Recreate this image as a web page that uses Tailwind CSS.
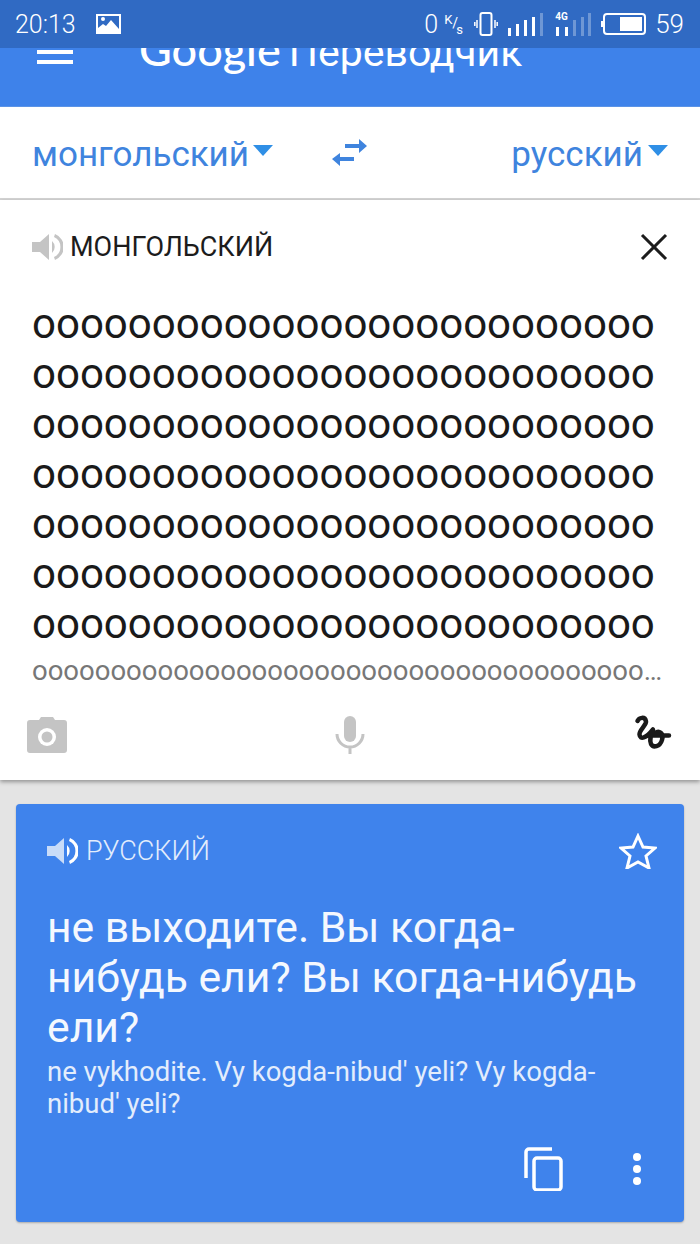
<!DOCTYPE html>
<html lang="ru">
<head>
<meta charset="UTF-8">
<meta name="viewport" content="width=device-width, initial-scale=1.0">
<script src="https://cdn.jsdelivr.net/npm/@tailwindcss/browser@4"></script>
<title>Google Переводчик</title>
</head>
<body class="w-[700px] h-[1244px] overflow-hidden bg-[#e4e4e4] font-[Roboto,sans-serif]">

  <!-- status bar -->
  <div class="h-[48px] bg-[#306ac3] text-white flex items-center pl-[15px] pr-[16px] relative z-10">
    <span class="text-[25px] leading-none font-light">20:13</span>
    <svg class="ml-[19px]" width="27" height="22" viewBox="0 0 27 22"><path fill="#fff" fill-rule="evenodd" d="M1 1h25v20H1z M3 3v12l5-4 3 2 5-6 8 9V3z"/><circle cx="8" cy="6" r="2" fill="#fff"/></svg>
    <span class="ml-auto text-[25px] leading-none font-light">0</span>
    <span class="ml-[6px] text-[13px] leading-none relative w-[20px] h-[22px]"><span class="absolute left-0 top-0">K</span><span class="absolute left-[8px] top-[3px] text-[14px]">/</span><span class="absolute left-[12px] top-[10px]">s</span></span>
    <svg class="ml-[10px]" width="24" height="26" viewBox="0 0 24 26" fill="none" stroke="#fff"><rect x="6.500" y="2" width="11" height="22" rx="2" stroke-width="2"/><path d="M3 9v8M0.800 11v4M21 9v8M23.200 11v4" stroke-width="1.500"/></svg>
    <svg class="ml-[9px]" width="36" height="26" viewBox="0 0 36 26" fill="#fff"><rect x="1" y="17" width="3" height="8"/><rect x="9" y="13" width="3" height="12"/><rect x="17" y="9" width="3" height="16"/><rect x="25" y="6" width="3" height="19"/><rect x="33" y="2" width="3" height="23" opacity=".3"/></svg>
    <span class="ml-[12px] w-[36px] h-[26px] relative block">
      <span class="absolute left-0 top-[1px] text-[10px] leading-none font-bold">4G</span>
      <svg class="absolute left-0 top-0" width="36" height="26" viewBox="0 0 36 26" fill="#fff"><rect x="1" y="16" width="3" height="9"/><rect x="10" y="16" width="3" height="9"/><rect x="18" y="9" width="3" height="16" opacity=".3"/><rect x="26" y="6" width="3" height="19" opacity=".3"/><rect x="33" y="2" width="3" height="23" opacity=".3"/></svg>
    </span>
    <svg class="ml-[10px]" width="45" height="24" viewBox="0 0 45 24"><rect x="0" y="9" width="2" height="6" fill="#fff"/><rect x="3" y="2" width="41" height="20" rx="3" fill="none" stroke="#fff" stroke-width="2"/><rect x="19" y="5" width="22" height="14" fill="#fff"/></svg>
    <span class="ml-[9px] text-[26px] leading-none font-light">59</span>
  </div>

  <!-- app bar -->
  <div class="h-[59px] bg-[#3e82ea] overflow-hidden flex items-start pl-[37px] border-b border-[#5b93e6]">
    <div class="flex flex-col gap-[6px] w-[36px] mt-[2px]">
      <span class="h-[4px] bg-white"></span>
      <span class="h-[4px] bg-white"></span>
    </div>
    <div class="ml-[66px] -mt-[22px] text-white text-[41px] leading-[46px] whitespace-nowrap"><span class="font-[Lato,sans-serif] font-medium text-[45px]">Google</span><span class="ml-[8px] font-normal">Переводчик</span></div>
  </div>

  <!-- language picker -->
  <div class="h-[93px] bg-white border-b-2 border-[#d4d4d4] flex items-center pl-[32px] pr-[32px] text-[#3f84de] text-[35px] relative">
    <div class="flex-1 flex items-center mt-[4px]">
      <span class="leading-none">монгольский</span>
      <svg class="ml-[4px] -mt-[8px]" width="20" height="12" viewBox="0 0 20 12"><path fill="#2f8fe6" d="M0 0h20L10 11z"/></svg>
    </div>
    <svg class="mt-[1px]" width="36" height="28" viewBox="0 0 36 28" fill="#3f84de"><path d="M8 14L0 20l8 7v-5h14v-4H8zM27 0v5H13v4h14v5l8-7z"/></svg>
    <div class="flex-1 flex items-center justify-end mt-[4px]">
      <span class="leading-none">русский</span>
      <svg class="ml-[5px] -mt-[8px]" width="20" height="12" viewBox="0 0 20 12"><path fill="#2f8fe6" d="M0 0h20L10 11z"/></svg>
    </div>
  </div>

  <!-- source panel -->
  <div class="h-[580px] bg-white shadow-[0_2px_4px_rgba(0,0,0,0.35)] relative pl-[32px] pr-[32px]">
    <div class="flex items-center h-[30px] mt-0 pt-[32px] box-content">
      <svg width="31" height="28" viewBox="0 0 31 28" fill="#c4c4c4"><path d="M0 9h8l9-8v26l-9-8H0z"/><path d="M20 8a8 8 0 0 1 0 12z"/><path d="M23 1a14 14 0 0 1 0 26l-1-3a11 11 0 0 0 0-20z"/></svg>
      <span class="ml-[7px] text-[27px] leading-none text-[#1c1c1c]">МОНГОЛЬСКИЙ</span>
      <svg class="ml-auto" width="28" height="28" viewBox="0 0 28 28" stroke="#1c1c1c" stroke-width="3"><path d="M2 2l24 24M26 2L2 26"/></svg>
    </div>
    <div class="mt-[37px] text-[42px] leading-[50px] text-[#1a1a1a] whitespace-nowrap">
      <div>оооооооооооооооооооооооооо</div>
      <div>оооооооооооооооооооооооооо</div>
      <div>оооооооооооооооооооооооооо</div>
      <div>оооооооооооооооооооооооооо</div>
      <div>оооооооооооооооооооооооооо</div>
      <div>оооооооооооооооооооооооооо</div>
      <div>оооооооооооооооооооооооооо</div>
    </div>
    <div class="mt-[8px] text-[27.5px] leading-[28px] text-[#777] whitespace-nowrap">ooooooooooooooooooooooooooooooooooooooo…</div>
    <div class="absolute left-[27px] right-[28px] top-[515px] flex items-center justify-between">
      <svg width="40" height="36" viewBox="0 0 40 36"><path fill="#c4c4c4" d="M12 3l2-3h12l2 3h9a3 3 0 0 1 3 3v27a3 3 0 0 1-3 3H3a3 3 0 0 1-3-3V6a3 3 0 0 1 3-3z"/><circle cx="20" cy="20" r="9" fill="#fff"/><circle cx="20" cy="20" r="5.500" fill="#c4c4c4"/></svg>
      <svg width="30" height="38" viewBox="0 0 30 38"><rect x="9" y="0" width="12" height="26" rx="6" fill="#c4c4c4"/><path d="M2 18a13 13 0 0 0 26 0M15 31v7" fill="none" stroke="#c4c4c4" stroke-width="3"/></svg>
      <svg width="40" height="40" viewBox="0 0 40 40" fill="none" stroke="#1a1a1a" stroke-width="4.500" stroke-linecap="round" stroke-linejoin="round"><path d="M5.500 6C7 2.500 13 1 14 6.500C14.500 10 7 15 7.500 19.500C8 25 14 23.500 21 14.500C19 20 17 25 19 29C21 33 28 32 30 25C32 18 27 15 23 18C21 19.500 20 20.500 20 20.500L37 20.500"/></svg>
    </div>
  </div>

  <!-- result card -->
  <div class="mt-[24px] mx-[16px] h-[418px] rounded-[4px] bg-[#3f83ec] shadow-[0_1px_2px_rgba(0,0,0,0.25)] text-white relative pl-[31px] pr-[27px]">
    <div class="flex items-center h-[30px] pt-[32px] box-content">
      <svg width="31" height="28" viewBox="0 0 31 28"><path fill="#c9dcf8" d="M0 9h8l9-8v26l-9-8H0z"/><path fill="#fff" d="M20 8a8 8 0 0 1 0 12z"/><path fill="#fff" d="M23 1a14 14 0 0 1 0 26l-1-3a11 11 0 0 0 0-20z"/></svg>
      <span class="ml-[8px] text-[27px] leading-none text-[#e3edfc] font-light">РУССКИЙ</span>
      <svg class="ml-auto" width="38" height="36" viewBox="0 0 38 36" fill="none" stroke="#fff" stroke-width="3" stroke-linejoin="miter"><path d="M19 3l5 11 12 1-9 8 3 12-11-6-11 6 3-12-9-8 12-1z"/></svg>
    </div>
    <div class="mt-[36px] text-[42.7px] leading-[50px] font-normal text-[#f4f8fe]">не выходите. Вы когда-<br>нибудь ели? Вы когда-нибудь<br>ели?</div>
    <div class="mt-[4px] text-[27.5px] leading-[32px] text-[#e3edfc] font-normal">ne vykhodite. Vy kogda-nibud' yeli? Vy kogda-<br>nibud' yeli?</div>
    <svg class="absolute left-[508px] top-[343px]" width="40" height="44" viewBox="0 0 40 44" fill="none" stroke="#fff" stroke-width="3.500"><path d="M28 2H5a3 3 0 0 0-3 3v26"/><rect x="10" y="11" width="27" height="32" rx="3"/></svg>
    <div class="absolute left-[617px] top-[349px] flex flex-col gap-[4px]">
      <span class="size-[8px] rounded-full bg-white"></span>
      <span class="size-[8px] rounded-full bg-white"></span>
      <span class="size-[8px] rounded-full bg-white"></span>
    </div>
  </div>
</body>
</html>
